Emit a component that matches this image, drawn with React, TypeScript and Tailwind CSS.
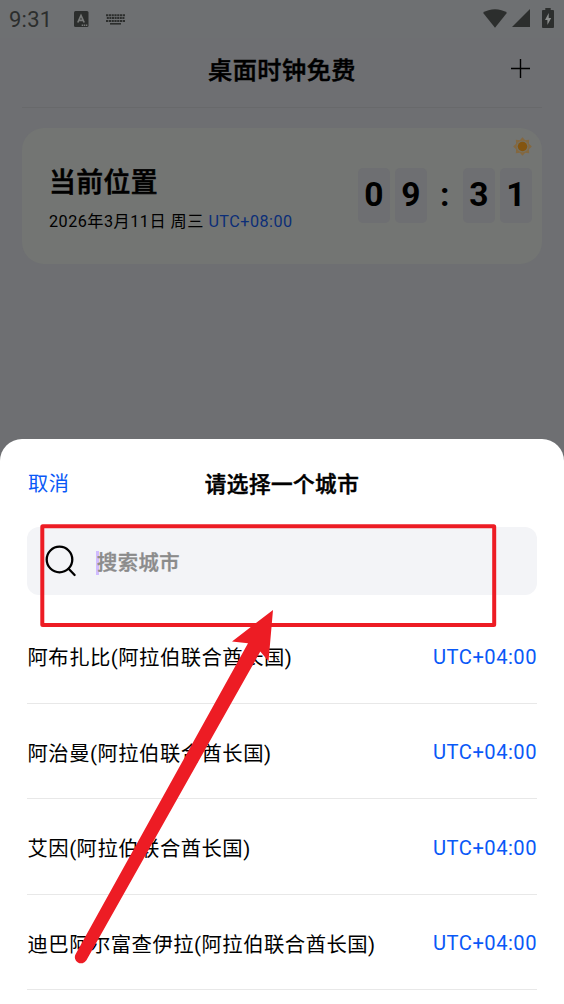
const cities = [
  { name: "阿布扎比(阿拉伯联合酋长国)", offset: "UTC+04:00" },
  { name: "阿治曼(阿拉伯联合酋长国)", offset: "UTC+04:00" },
  { name: "艾因(阿拉伯联合酋长国)", offset: "UTC+04:00" },
  { name: "迪巴阿尔富查伊拉(阿拉伯联合酋长国)", offset: "UTC+04:00" },
];

export default function App() {
  return (
    <div className="relative flex h-[1004px] w-[564px] flex-col overflow-hidden bg-[#6e6f72] font-['Roboto','Noto_Sans_CJK_SC',sans-serif] tracking-[0.03em] text-black">
      <StatusBar />
      <Header />
      <LocationCard />
      <CitySheet />
      <Annotation />
    </div>
  );
}

function StatusBar() {
  return (
    <div className="flex h-[38px] shrink-0 items-center justify-between bg-[#6e7072] pl-[9px] pr-[10px] text-[#2c2e2d]">
      <div className="flex items-center">
        <span className="w-[65px] pt-0.5 text-[22px] leading-none tracking-[0.01em]">9:31</span>
        <svg className="h-4 w-[15px]" viewBox="0 0 15 16" aria-hidden="true">
          <rect width="14.5" height="16" rx="1.5" fill="currentColor" />
          <path d="M3.8 11.5L7 4.5l3.2 7M5 9.3h4" fill="none" stroke="#777978" strokeWidth="1.7" />
          <path d="M7.7 14.2h6" stroke="#777978" strokeWidth="1.4" strokeDasharray="1.4 0.7" />
        </svg>
        <svg className="ml-[17px] h-[11px] w-5" viewBox="0 0 20 11" fill="none" stroke="currentColor" aria-hidden="true">
          <path d="M0 1.2h19.5M0 7h19.5" strokeWidth="2" strokeDasharray="2.2 0.6" />
          <path d="M0.8 4.1h18" strokeWidth="2" strokeDasharray="2 0.6" />
          <path d="M4 9.8h11" strokeWidth="1.6" />
        </svg>
      </div>
      <div className="flex items-center pb-0.5">
        <svg className="h-[19px] w-6" viewBox="0 0 24 19" fill="currentColor" aria-hidden="true">
          <path d="M0 3.8C6.5-1.1 17.5-1.1 24 3.8L12 18.8z" />
        </svg>
        <svg className="ml-[5px] h-[18px] w-[18px]" viewBox="0 0 18 18" fill="currentColor" aria-hidden="true">
          <path d="M18 0v18H0z" />
        </svg>
        <svg className="ml-3 h-5 w-3" viewBox="0 0 12 20" aria-hidden="true">
          <path d="M3.3 0h5.4v2H11q1 0 1 1v16q0 1-1 1H1q-1 0-1-1V3q0-1 1-1h2.3z" fill="currentColor" />
          <path d="M6.7 5L3 12h2.4v5L9.2 10H6.7z" fill="#8b8d8c" />
        </svg>
      </div>
    </div>
  );
}

function Header() {
  return (
    <header className="mx-[22px] flex h-[70px] shrink-0 items-center justify-between border-b border-[#68696b] pb-2">
      <span className="w-[31px]" />
      <h1 className="pt-[5px] text-[24.2px] font-medium leading-none [-webkit-text-stroke:0.5px]">桌面时钟免费</h1>
      <svg className="mr-3 h-[19px] w-[19px]" viewBox="0 0 19 19" stroke="black" strokeWidth="1.4" aria-hidden="true">
        <path d="M9.5 0v19M0 9.5h19" />
      </svg>
    </header>
  );
}

function LocationCard() {
  return (
    <section className="relative mx-[22px] mt-5 flex h-[136px] shrink-0 items-center justify-between rounded-[22px] bg-[#737573] pl-[27px] pr-[10.5px]">
      <div className="flex flex-col gap-[13px] pt-[7px]">
        <h2 className="text-[26.8px] font-medium leading-8 [-webkit-text-stroke:0.6px]">当前位置</h2>
        <p className="whitespace-nowrap text-[16.2px] leading-5">
          2026年3月11日 周三 <span className="text-[#0b2e78]">UTC+08:00</span>
        </p>
      </div>
      <div className="flex items-center pb-[2px] text-[33.5px] font-bold leading-none tracking-normal">
        <Digit value="0" />
        <span className="w-[5.5px]" />
        <Digit value="9" />
        <span className="w-[36.5px] text-center">:</span>
        <Digit value="3" />
        <span className="w-[5.5px]" />
        <Digit value="1" />
      </div>
      <svg className="absolute right-[10px] top-[9px] h-[19px] w-[19px]" viewBox="0 0 20 20" aria-hidden="true">
        <path
          d="M10 .2L12.8 3.3 17 3l-.3 4.2L19.8 10l-3.1 2.8.3 4.2-4.2-.3L10 19.8l-2.8-3.1L3 17l.3-4.2L.2 10l3.1-2.8L3 3l4.2.3z"
          fill="#84683f"
        />
        <circle cx="10" cy="10" r="6.4" fill="#77705f" />
        <circle cx="10" cy="10" r="5" fill="#84550f" />
      </svg>
    </section>
  );
}

function Digit({ value }: { value: string }) {
  return (
    <span className="flex h-[55px] w-[31.5px] items-center justify-center rounded-[5px] bg-[#6e6f72]">
      {value}
    </span>
  );
}

function CitySheet() {
  return (
    <main className="mt-[175px] h-[565px] shrink-0 rounded-t-[22px] bg-white px-[27px]">
      <div className="flex h-[88px] items-center justify-between pt-[3px]">
        <button className="w-[60px] pl-px text-left text-[20.2px] leading-none text-[#0a59f7]">取消</button>
        <h2 className="text-[21.6px] font-medium leading-none [-webkit-text-stroke:0.5px]">请选择一个城市</h2>
        <span className="w-[60px]" />
      </div>
      <div className="flex h-[68px] items-center rounded-xl bg-[#f3f4f7] pl-[18px]">
        <svg className="h-8 w-8" viewBox="0 0 32 32" fill="none" stroke="black" strokeWidth="2.3" strokeLinecap="round" aria-hidden="true">
          <circle cx="14.5" cy="14.5" r="12.8" />
          <path d="M23.6 23.8l6 6.2" />
        </svg>
        <span className="ml-[19px] mt-[3px] h-6 w-[3px] bg-[#d0bcff]" />
        <span className="ml-[-2px] pt-1 text-[20.3px] font-medium leading-none text-[#8b8b8b] [-webkit-text-stroke:0.4px]">搜索城市</span>
      </div>
      <ul className="mt-[13px]">
        {cities.map((city) => (
          <li key={city.name} className="flex h-[95.5px] items-center justify-between border-b border-[#e8e8e8]">
            <span className="pl-[0.5px] pt-[7px] text-[20.35px]">{city.name}</span>
            <span className="pt-[3px] text-[20.2px] text-[#0a59f7]">{city.offset}</span>
          </li>
        ))}
      </ul>
    </main>
  );
}

// Red frame and arrow pointing at the search field
function Annotation() {
  return (
    <svg className="pointer-events-none absolute inset-0 h-full w-full" viewBox="0 0 564 1004" aria-hidden="true">
      <rect x="42.3" y="526.3" width="451.9" height="98.8" rx="0.5" fill="none" stroke="#ed1c24" strokeWidth="4" />
      <path d="M273 610L232 641.5l16 1.7L75.7 954A6 6 0 0 0 86.4 960.3L260.3 651.5l8.2 9.7z" fill="#ed1c24" />
    </svg>
  );
}
